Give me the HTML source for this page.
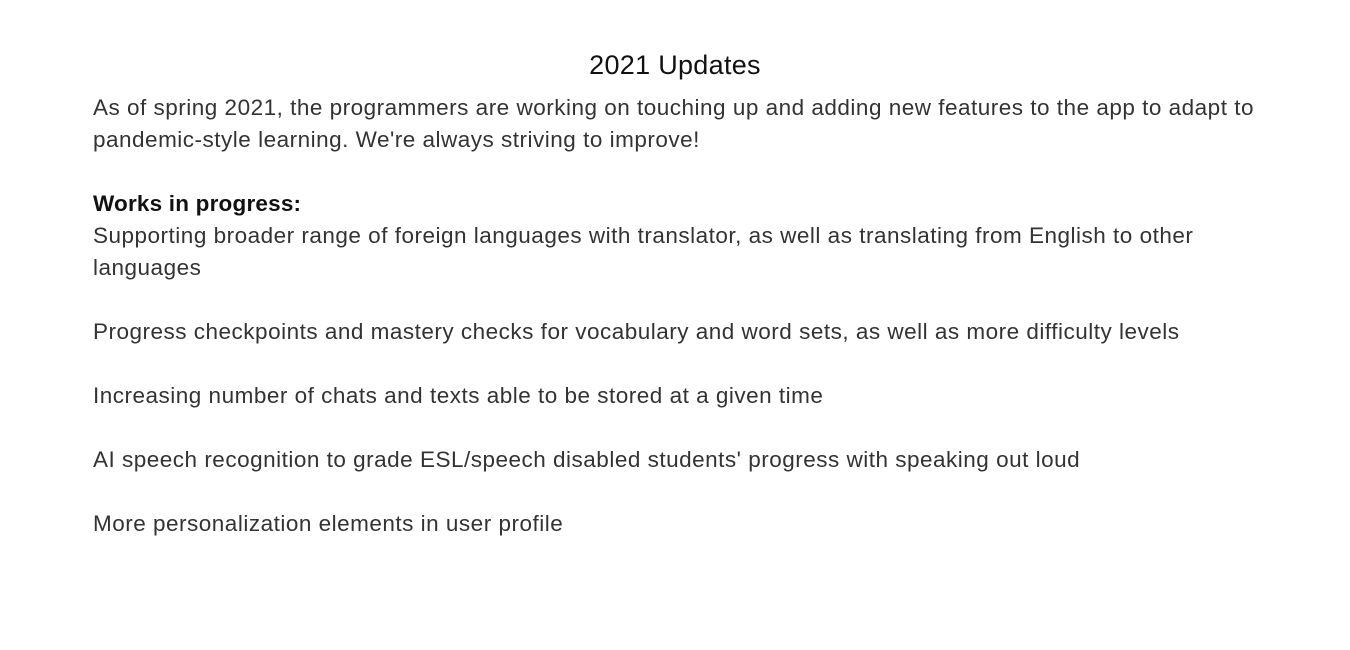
<!DOCTYPE html>
<html><head><meta charset="utf-8">
<style>
html,body{margin:0;padding:0;background:#fff;width:1350px;height:650px;overflow:hidden}
body{font-family:"Liberation Sans",sans-serif;color:#222}
.title{position:absolute;top:49px;left:0;width:1350px;text-align:center;font-size:27px;line-height:32px;color:#111;letter-spacing:0.3px}
.body{position:absolute;top:92px;left:93px;font-size:22.5px;line-height:32px;white-space:nowrap;letter-spacing:0.5px;color:#333}
b{font-weight:bold;color:#111;letter-spacing:0.2px}
</style></head><body>
<div class="title">2021 Updates</div>
<div class="body">As of spring 2021, the programmers are working on touching up and adding new features to the app to adapt to<br>pandemic-style learning. We're always striving to improve!<br><br><b>Works in progress:</b><br>Supporting broader range of foreign languages with translator, as well as translating from English to other<br>languages<br><br>Progress checkpoints and mastery checks for vocabulary and word sets, as well as more difficulty levels<br><br>Increasing number of chats and texts able to be stored at a given time<br><br>AI speech recognition to grade ESL/speech disabled students' progress with speaking out loud<br><br>More personalization elements in user profile</div>
</body></html>
